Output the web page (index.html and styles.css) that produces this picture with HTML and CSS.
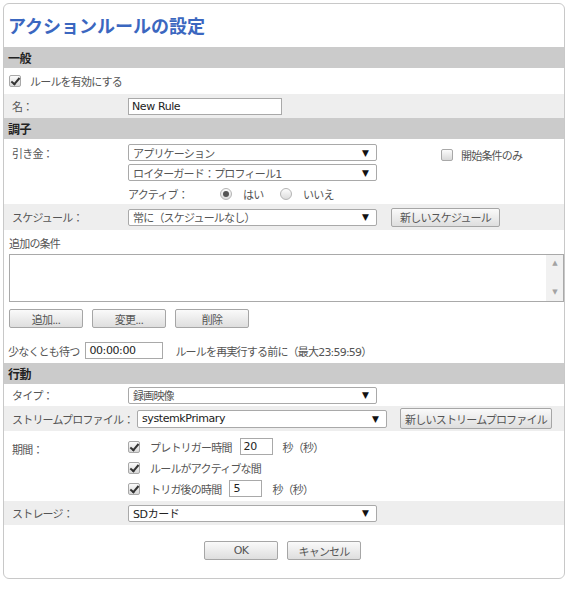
FILE: index.html
```html
<!DOCTYPE html>
<html lang="ja">
<head>
    <meta charset="UTF-8">
    <meta name="viewport" content="width=device-width, initial-scale=1.0">
    <title>アクションルールの設定</title>
    <link rel="stylesheet" href="styles.css">
</head>
<body>
    <div class="panel">
        <h1 class="title">アクションルールの設定</h1>

        <!-- 一般 -->
        <div class="section">一般</div>
        <div class="row row-enable">
            <span class="check on"></span>
            <span class="text">ルールを有効にする</span>
        </div>
        <div class="row gray row-name">
            <span class="label">名：</span>
            <span class="input name-input">New Rule</span>
        </div>

        <!-- 調子 -->
        <div class="section">調子</div>
        <div class="row row-trigger">
            <span class="label">引き金：</span>
            <div class="stack">
                <span class="select"><span>アプリケーション</span><i>▼</i></span>
                <span class="select"><span>ロイターガード：プロフィール1</span><i>▼</i></span>
                <div class="radios">
                    <span class="radio-label">アクティブ：</span>
                    <span class="radio on"></span><span class="text yes">はい</span>
                    <span class="radio"></span><span class="text">いいえ</span>
                </div>
            </div>
            <div class="start-only">
                <span class="check"></span>
                <span class="text">開始条件のみ</span>
            </div>
        </div>
        <div class="row gray row-schedule">
            <span class="label">スケジュール：</span>
            <span class="select"><span>常に（スケジュールなし）</span><i>▼</i></span>
            <button class="btn btn-schedule">新しいスケジュール</button>
        </div>
        <div class="conditions">
            <div class="cond-title">追加の条件</div>
            <div class="listbox">
                <div class="scroll"><i>▲</i><i>▼</i></div>
            </div>
            <div class="cond-buttons">
                <button class="btn">追加...</button>
                <button class="btn">変更...</button>
                <button class="btn">削除</button>
            </div>
            <div class="wait">
                <span class="text">少なくとも待つ</span>
                <span class="input wait-input">00:00:00</span>
                <span class="text">ルールを再実行する前に（最大23:59:59）</span>
            </div>
        </div>

        <!-- 行動 -->
        <div class="section">行動</div>
        <div class="row row-type">
            <span class="label">タイプ：</span>
            <span class="select"><span>録画映像</span><i>▼</i></span>
        </div>
        <div class="row gray row-stream">
            <span class="label stream-label">ストリームプロファイル：</span>
            <span class="select dark"><span>systemkPrimary</span><i>▼</i></span>
            <button class="btn btn-stream">新しいストリームプロファイル</button>
        </div>
        <div class="row row-duration">
            <span class="label">期間：</span>
            <div class="stack dur">
                <div class="dur-line">
                    <span class="check on"></span>
                    <span class="text">プレトリガー時間</span>
                    <span class="input sec-input">20</span>
                    <span class="text">秒（秒）</span>
                </div>
                <div class="dur-line">
                    <span class="check on"></span>
                    <span class="text">ルールがアクティブな間</span>
                </div>
                <div class="dur-line">
                    <span class="check on"></span>
                    <span class="text">トリガ後の時間</span>
                    <span class="input sec-input">5</span>
                    <span class="text">秒（秒）</span>
                </div>
            </div>
        </div>
        <div class="row gray row-storage">
            <span class="label">ストレージ：</span>
            <span class="select dark"><span>SDカード</span><i>▼</i></span>
        </div>

        <div class="footer">
            <button class="btn">OK</button>
            <button class="btn">キャンセル</button>
        </div>
    </div>
</body>
</html>
```

FILE: styles.css
```css
body {
    margin: 0;
    font-family: "DejaVu Sans", "Noto Sans CJK JP", sans-serif;
    font-size: 11px;
    letter-spacing: -0.8px;
    color: #555;
    background: #fff;
}

.panel {
    margin: 3px 0 0 3px;
    width: 562px;
    height: 576px;
    border: 1px solid #c8c8c8;
    border-radius: 6px;
    box-sizing: border-box;
    overflow: hidden;
}

.title {
    margin: 0;
    height: 43px;
    padding: 9px 0 0 4px;
    box-sizing: border-box;
    font-family: "Noto Sans CJK JP", sans-serif;
    font-size: 18px;
    font-weight: bold;
    letter-spacing: 0;
    color: #3b67c0;
    line-height: 24px;
}

.section {
    height: 21px;
    line-height: 21px;
    background: #cbcbcb;
    padding-left: 4px;
    font-family: "Noto Sans CJK JP", sans-serif;
    font-weight: bold;
    font-size: 12px;
    letter-spacing: -0.5px;
    color: #222;
}

.row {
    display: flex;
    align-items: center;
    padding-left: 4px;
    background: #fff;
}

.row.gray {
    background: #eeeeee;
}

.label {
    width: 120px;
    padding-left: 4px;
    box-sizing: border-box;
    flex-shrink: 0;
    white-space: nowrap;
}

.text {
    white-space: nowrap;
}

.row-enable { height: 26px; padding-left: 5px; }
.row-enable .text { margin-left: 9px; }
.row-name { height: 24px; }
.row-trigger { height: 65px; align-items: flex-start; padding-top: 5px; box-sizing: border-box; }
.row-trigger .label { margin-top: 1px; }
.row-schedule { height: 26px; }
.row-type { height: 22px; }
.row-stream { height: 25px; }
.row-duration { height: 70px; align-items: flex-start; padding-top: 7px; box-sizing: border-box; }
.row-duration .label { margin-top: 3px; }
.row-storage { height: 24px; }

.input {
    display: inline-block;
    height: 17px;
    line-height: 15px;
    border: 1px solid #a9a9a9;
    background: #fff;
    box-sizing: border-box;
    padding-left: 3px;
    color: #222;
    letter-spacing: -0.4px;
}

.name-input { width: 154px; }
.wait-input { width: 78px; margin: 0 12px 0 6px; }
.sec-input { width: 33px; margin: 0 10px 0 8px; }

.select {
    display: flex;
    align-items: center;
    justify-content: space-between;
    width: 249px;
    height: 17px;
    border: 1px solid #a9a9a9;
    border-radius: 2px;
    background: #fff;
    box-sizing: border-box;
    padding: 0 8px 0 4px;
    flex-shrink: 0;
    white-space: nowrap;
}

.select i {
    font-style: normal;
    font-size: 9px;
    color: #111;
}

.select.dark span {
    color: #222;
    letter-spacing: -0.4px;
}

.row-stream .select {
    width: 250px;
    height: 18px;
}

.stream-label {
    width: 129px;
}

.stack {
    display: flex;
    flex-direction: column;
    gap: 3px;
}

.radios {
    display: flex;
    align-items: center;
    height: 18px;
    margin-top: 1px;
}

.radio-label {
    width: 92px;
}

.radio {
    width: 12px;
    height: 12px;
    border-radius: 50%;
    border: 1px solid #b4b4b4;
    background: linear-gradient(#fdfdfd, #dcdcdc);
    box-sizing: border-box;
    position: relative;
    margin-right: 11px;
}

.radio.on::after {
    content: "";
    position: absolute;
    left: 2px;
    top: 2px;
    width: 6px;
    height: 6px;
    border-radius: 50%;
    background: #555;
}

.radios .yes {
    width: 37px;
}

.check {
    width: 12px;
    height: 12px;
    border: 1px solid #a8a8a8;
    border-radius: 2px;
    background: linear-gradient(#fbfbfb, #d8d8d8);
    box-sizing: border-box;
    position: relative;
    flex-shrink: 0;
}

.check.on::after {
    content: "";
    position: absolute;
    left: 3px;
    top: 0px;
    width: 3px;
    height: 7px;
    border: solid #333;
    border-width: 0 2px 2px 0;
    transform: rotate(40deg);
}

.start-only {
    display: flex;
    align-items: center;
    margin-left: 64px;
    margin-top: 3px;
}

.start-only .text {
    margin-left: 8px;
}

.btn {
    height: 19px;
    padding: 0;
    border: 1px solid #a6a6a6;
    border-radius: 2px;
    background: linear-gradient(#fafafa, #dedede);
    font-family: "DejaVu Sans", "Noto Sans CJK JP", sans-serif;
    font-size: 11px;
    letter-spacing: -0.8px;
    color: #555;
    cursor: pointer;
    width: 74px;
    white-space: nowrap;
}

.btn-schedule {
    width: 109px;
    margin-left: 14px;
}

.btn-stream {
    width: 152px;
    height: 21px;
    margin-left: 13px;
}

.conditions {
    height: 133px;
    padding: 5px 0 0 5px;
    box-sizing: border-box;
}

.cond-title {
    height: 19px;
    line-height: 19px;
}

.listbox {
    width: 555px;
    height: 48px;
    border: 1px solid #a9a9a9;
    box-sizing: border-box;
    display: flex;
    justify-content: flex-end;
}

.scroll {
    width: 17px;
    background: #f1f1f1;
    display: flex;
    flex-direction: column;
    justify-content: space-between;
    align-items: center;
    padding: 4px 0 5px;
    box-sizing: border-box;
}

.scroll i {
    font-style: normal;
    font-size: 7px;
    color: #a3a3a3;
}

.cond-buttons {
    display: flex;
    gap: 9px;
    margin-top: 7px;
}

.wait {
    display: flex;
    align-items: center;
    margin-top: 14px;
    margin-left: -1px;
}

.dur-line {
    display: flex;
    align-items: center;
    height: 17px;
}

.dur-line .check {
    margin-right: 10px;
}

.dur {
    gap: 4px;
}

.footer {
    display: flex;
    justify-content: center;
    gap: 9px;
    padding-top: 16px;
    padding-right: 3px;
}
```
